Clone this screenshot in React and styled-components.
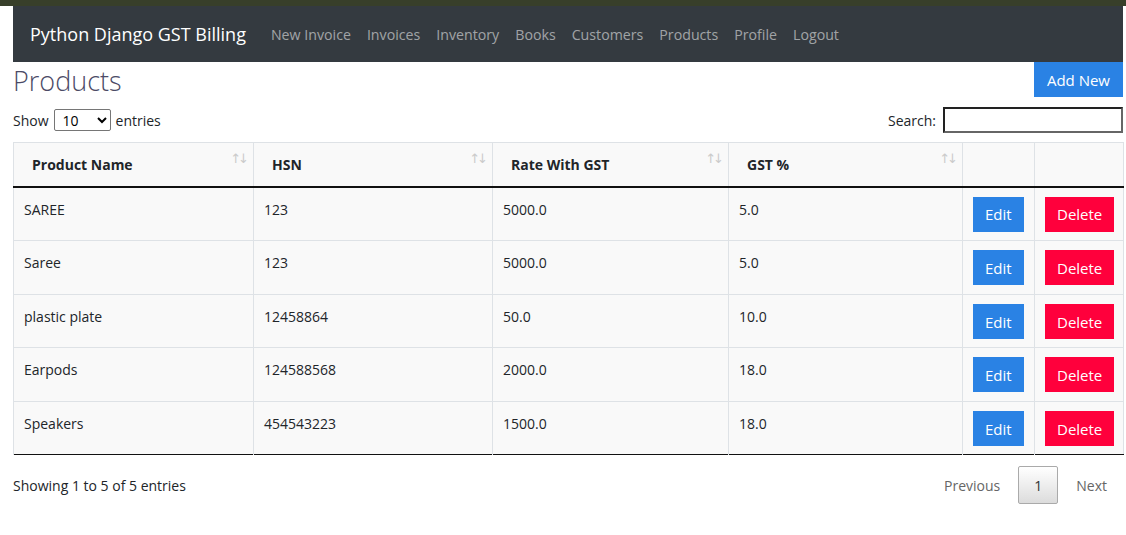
import React from "react";
import styled, { createGlobalStyle } from "styled-components";

const GlobalStyle = createGlobalStyle`
  body {
    margin: 0;
    background: #ffffff;
    font-family: "Open Sans", "Noto Sans", sans-serif;
    color: #212529;
  }
`;

const TopBand = styled.div`
  height: 6px;
  background: #383f2a;
`;

const Page = styled.div`
  padding: 0 3px 0 13px;
`;

const Navbar = styled.nav`
  display: flex;
  align-items: center;
  height: 56px;
  padding: 0 17px;
  background: #343a40;
`;

const Brand = styled.span`
  font-size: 18px;
  color: #ffffff;
  margin-right: 17px;
`;

const NavLinks = styled.div`
  display: flex;
`;

const NavItem = styled.a`
  padding: 0 8px;
  font-size: 14.2px;
  color: rgba(255, 255, 255, 0.55);
  text-decoration: none;
`;

const TitleRow = styled.div`
  display: flex;
  justify-content: space-between;
  align-items: flex-start;
`;

const Title = styled.h1`
  margin: 0;
  font-size: 27px;
  font-weight: 300;
  line-height: 38px;
  color: #4b4a66;
`;

const Button = styled.button`
  display: block;
  border: none;
  border-radius: 0;
  font-family: inherit;
  font-size: 15px;
  color: #ffffff;
  background: ${(p) => (p.$danger ? "#ff003c" : "#2a82e4")};
  height: 35px;
  padding: 0 ${(p) => (p.$wide ? "13px" : "12px")};
  cursor: pointer;
`;

const Controls = styled.div`
  display: flex;
  justify-content: space-between;
  align-items: center;
  margin-top: 7px;
  margin-bottom: 9px;
  font-size: 14px;
`;

const Label = styled.label`
  display: flex;
  align-items: center;
  gap: 5px;
`;

const Select = styled.select`
  width: 57px;
  height: 22px;
  font-family: inherit;
  font-size: 14px;
  border: 1px solid #767676;
  border-radius: 2px;
  background: #fff;
  padding: 0 2px 0 4px;
`;

const SearchInput = styled.input`
  width: 180px;
  height: 26px;
  box-sizing: border-box;
  border: 2px solid #222;
  border-right-color: #666;
  border-bottom-color: #666;
  margin-left: 2px;
`;

const Table = styled.table`
  width: 100%;
  table-layout: fixed;
  border-collapse: collapse;
  font-size: 14px;
  background: #f9f9f9;
  border-left: 1px solid #dee2e6;
  border-right: 1px solid #dee2e6;
  border-bottom: 1px solid #111;
`;

const Th = styled.th`
  position: relative;
  height: 44px;
  padding: 0 18px;
  text-align: left;
  font-weight: 700;
  border-top: 1px solid #dee2e6;
  border-left: 1px solid #dee2e6;
  border-bottom: 2px solid #111;
  box-sizing: border-box;
`;

const SortIcon = styled.span`
  position: absolute;
  right: 7px;
  top: 8px;
  font-family: "DejaVu Sans", sans-serif;
  font-size: 13px;
  font-weight: 400;
  color: #cbcbcb;
  letter-spacing: -3px;
`;

const Row = styled.tr`
  height: ${(p) => (p.$short ? "53px" : "54px")};
`;

const Td = styled.td`
  padding: ${(p) => (p.$action ? "9px 10px 8px" : "13px 10px")};
  vertical-align: top;
  border-left: 1px solid #dee2e6;
  border-top: 1px solid #dee2e6;
  box-sizing: border-box;
  line-height: 18px;
`;

const Footer = styled.div`
  display: flex;
  justify-content: space-between;
  align-items: center;
  padding-top: 11px;
  font-size: 14px;
`;

const Pager = styled.div`
  display: flex;
  align-items: center;
`;

const PageLink = styled.span`
  padding: ${(p) => (p.$next ? "0 16px 0 18px" : "0 18px 0 0")};
  color: #666;
  font-size: 14px;
`;

const PageCurrent = styled.span`
  display: flex;
  align-items: center;
  justify-content: center;
  width: 40px;
  height: 38px;
  box-sizing: border-box;
  border: 1px solid #aaa;
  border-radius: 2px;
  background: linear-gradient(#fff, #dcdcdc);
  color: #333;
  font-size: 14px;
`;

const products = [
  { name: "SAREE", hsn: "123", rate: "5000.0", gst: "5.0" },
  { name: "Saree", hsn: "123", rate: "5000.0", gst: "5.0" },
  { name: "plastic plate", hsn: "12458864", rate: "50.0", gst: "10.0", short: true },
  { name: "Earpods", hsn: "124588568", rate: "2000.0", gst: "18.0" },
  { name: "Speakers", hsn: "454543223", rate: "1500.0", gst: "18.0", short: true },
];

const navItems = [
  "New Invoice",
  "Invoices",
  "Inventory",
  "Books",
  "Customers",
  "Products",
  "Profile",
  "Logout",
];

const columns = ["Product Name", "HSN", "Rate With GST", "GST %"];
const colWidths = [240, 239, 236, 234, 72, 89];

export default function App() {
  return (
    <>
      <GlobalStyle />
      <TopBand />
      <Page>
        <Navbar>
          <Brand>Python Django GST Billing</Brand>
          <NavLinks>
            {navItems.map((n) => (
              <NavItem key={n} href="#">
                {n}
              </NavItem>
            ))}
          </NavLinks>
        </Navbar>

        <TitleRow>
          <Title>Products</Title>
          <Button $wide>Add New</Button>
        </TitleRow>

        <Controls>
          <Label>
            Show
            <Select defaultValue="10">
              <option>10</option>
              <option>25</option>
              <option>50</option>
              <option>100</option>
            </Select>
            entries
          </Label>
          <Label>
            Search:
            <SearchInput type="search" />
          </Label>
        </Controls>

        <Table>
          <colgroup>
            {colWidths.map((w, i) => (
              <col key={i} style={{ width: w }} />
            ))}
          </colgroup>
          <thead>
            <tr>
              {columns.map((c) => (
                <Th key={c}>
                  {c}
                  <SortIcon>↑↓</SortIcon>
                </Th>
              ))}
              <Th />
              <Th />
            </tr>
          </thead>
          <tbody>
            {products.map((p, i) => (
              <Row key={i} $short={p.short}>
                <Td>{p.name}</Td>
                <Td>{p.hsn}</Td>
                <Td>{p.rate}</Td>
                <Td>{p.gst}</Td>
                <Td $action>
                  <Button>Edit</Button>
                </Td>
                <Td $action>
                  <Button $danger>Delete</Button>
                </Td>
              </Row>
            ))}
          </tbody>
        </Table>

        <Footer>
          <span>Showing 1 to 5 of 5 entries</span>
          <Pager>
            <PageLink>Previous</PageLink>
            <PageCurrent>1</PageCurrent>
            <PageLink $next>Next</PageLink>
          </Pager>
        </Footer>
      </Page>
    </>
  );
}
